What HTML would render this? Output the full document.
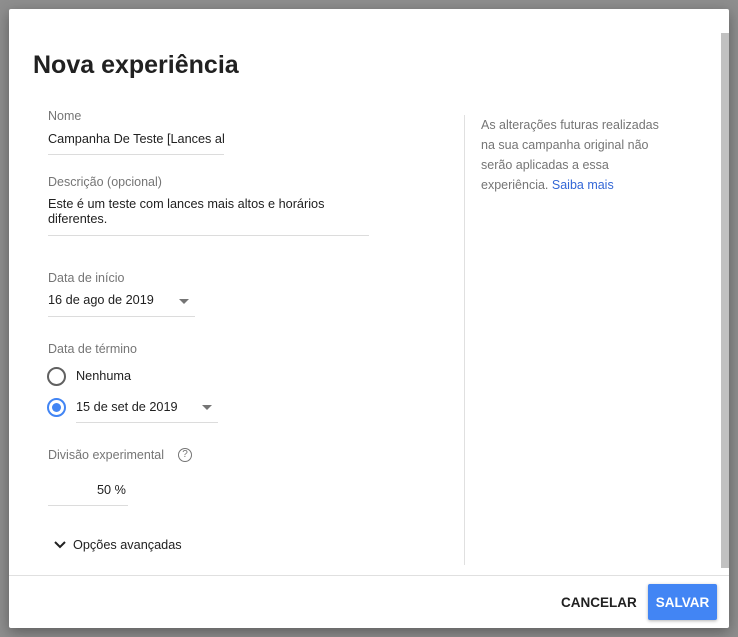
<!DOCTYPE html>
<html><head><meta charset="utf-8"><style>
*{margin:0;padding:0;box-sizing:border-box}
body{width:738px;height:637px;background:#8e8e8e;font-family:"Liberation Sans",Arial,sans-serif;position:relative;overflow:hidden}
.dlg{position:absolute;left:9px;top:9px;width:720px;height:619px;background:#fff;border-radius:2px;box-shadow:0 4px 14px rgba(0,0,0,.35)}
.a{position:absolute;white-space:nowrap}
.lbl{font-size:12.5px;color:#757575}
.val{font-size:12.7px;color:#212121}
.line{position:absolute;height:1px;background:#dcdcdc}
.tri{position:absolute;width:0;height:0;border-left:5px solid transparent;border-right:5px solid transparent;border-top:5px solid #757575}
</style></head><body>
<div class="dlg">
<div class="a" style="left:24px;top:42px;font-size:25px;font-weight:bold;color:#212121">Nova experiência</div>

<div class="a lbl" style="left:39px;top:100px">Nome</div>
<div class="a val" style="left:39px;top:123px">Campanha De Teste [Lances al</div>
<div class="line" style="left:39px;top:145px;width:176px"></div>

<div class="a lbl" style="left:39px;top:166px">Descrição (opcional)</div>
<div class="a val" style="left:39px;top:188px;line-height:15px">Este é um teste com lances mais altos e horários<br>diferentes.</div>
<div class="line" style="left:39px;top:226px;width:321px"></div>

<div class="a lbl" style="left:39px;top:262px">Data de início</div>
<div class="a val" style="left:39px;top:284px">16 de ago de 2019</div>
<div class="tri" style="left:170px;top:290px"></div>
<div class="line" style="left:39px;top:307px;width:147px"></div>

<div class="a lbl" style="left:39px;top:333px">Data de término</div>
<div class="a" style="left:38px;top:358px;width:19px;height:19px;border:2px solid #616161;border-radius:50%"></div>
<div class="a val" style="left:67px;top:360px">Nenhuma</div>
<div class="a" style="left:38px;top:389px;width:19px;height:19px;border:2px solid #4285f4;border-radius:50%"><div style="position:absolute;left:3px;top:3px;width:9px;height:9px;border-radius:50%;background:#4285f4"></div></div>
<div class="a val" style="left:67px;top:391px">15 de set de 2019</div>
<div class="tri" style="left:193px;top:396px"></div>
<div class="line" style="left:67px;top:413px;width:142px"></div>

<div class="a lbl" style="left:39px;top:439px">Divisão experimental</div>
<div class="a" style="left:169px;top:439px;width:14px;height:14px;border:1.3px solid #757575;border-radius:50%;font-size:10px;color:#757575;text-align:center;line-height:12px">?</div>
<div class="a val" style="left:88px;top:474px">50 %</div>
<div class="line" style="left:39px;top:496px;width:80px"></div>

<svg class="a" style="left:44px;top:531px" width="14" height="10" viewBox="0 0 14 10"><path d="M2 2 L7 7 L12 2" fill="none" stroke="#212121" stroke-width="2"/></svg>
<div class="a val" style="left:64px;top:529px">Opções avançadas</div>

<div class="a" style="left:455px;top:106px;width:1px;height:450px;background:#e0e0e0"></div>
<div class="a" style="left:472px;top:106px;font-size:12.5px;color:#757575;line-height:20px">As alterações futuras realizadas<br>na sua campanha original não<br>serão aplicadas a essa<br>experiência. <span style="color:#3367d6">Saiba mais</span></div>

<div class="a" style="left:712px;top:24px;width:8px;height:535px;background:#c1c1c1"></div>
<div class="line" style="left:0;top:566px;width:720px;background:#e0e0e0"></div>
<div class="a" style="left:552px;top:586px;font-size:13.5px;font-weight:bold;color:#212121">CANCELAR</div>
<div class="a" style="left:639px;top:575px;width:69px;height:36px;background:#4285f4;border-radius:2px;box-shadow:0 1px 3px rgba(0,0,0,.3);color:#fff;font-size:13.5px;font-weight:bold;text-align:center;line-height:38px">SALVAR</div>
</div>
</body></html>
